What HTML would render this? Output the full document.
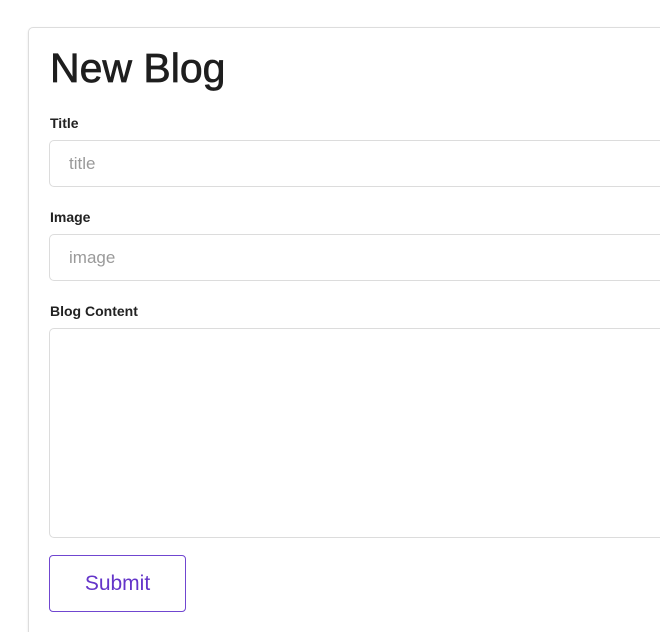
<!DOCTYPE html>
<html><head><style>
html,body{margin:0;width:660px;height:632px;overflow:hidden}
body{background:#fff;font-family:"Liberation Sans",sans-serif;position:relative}
.card{position:absolute;left:28px;top:27px;width:700px;height:620px;border:1px solid #ddd;border-radius:5px;box-shadow:0 1px 2px rgba(0,0,0,.1)}
h1{position:absolute;left:50px;top:44px;margin:0;font-size:41px;font-weight:normal;color:#1e1e1e;letter-spacing:0;line-height:48px;-webkit-text-stroke:0.7px #1e1e1e}
.lbl{position:absolute;left:50px;font-size:14px;font-weight:bold;color:#222}
.inp{position:absolute;left:49px;width:700px;border:1px solid #dcdcdc;border-radius:5px;box-sizing:border-box}
.ph{position:absolute;left:19px;top:13px;font-size:17px;color:#9a9a9a}
.btn{position:absolute;left:49px;top:555px;width:137px;height:57px;box-sizing:border-box;border:1px solid #7046d0;border-radius:4px;color:#6435c9;font-size:21px;text-align:center;line-height:55px}
</style></head><body>
<div class="card"></div>
<h1>New Blog</h1>
<div class="lbl" style="top:115px">Title</div>
<div class="inp" style="top:140px;height:47px"><span class="ph">title</span></div>
<div class="lbl" style="top:209px">Image</div>
<div class="inp" style="top:234px;height:47px"><span class="ph">image</span></div>
<div class="lbl" style="top:303px">Blog Content</div>
<div class="inp" style="top:328px;height:210px"></div>
<div class="btn">Submit</div>
</body></html>
